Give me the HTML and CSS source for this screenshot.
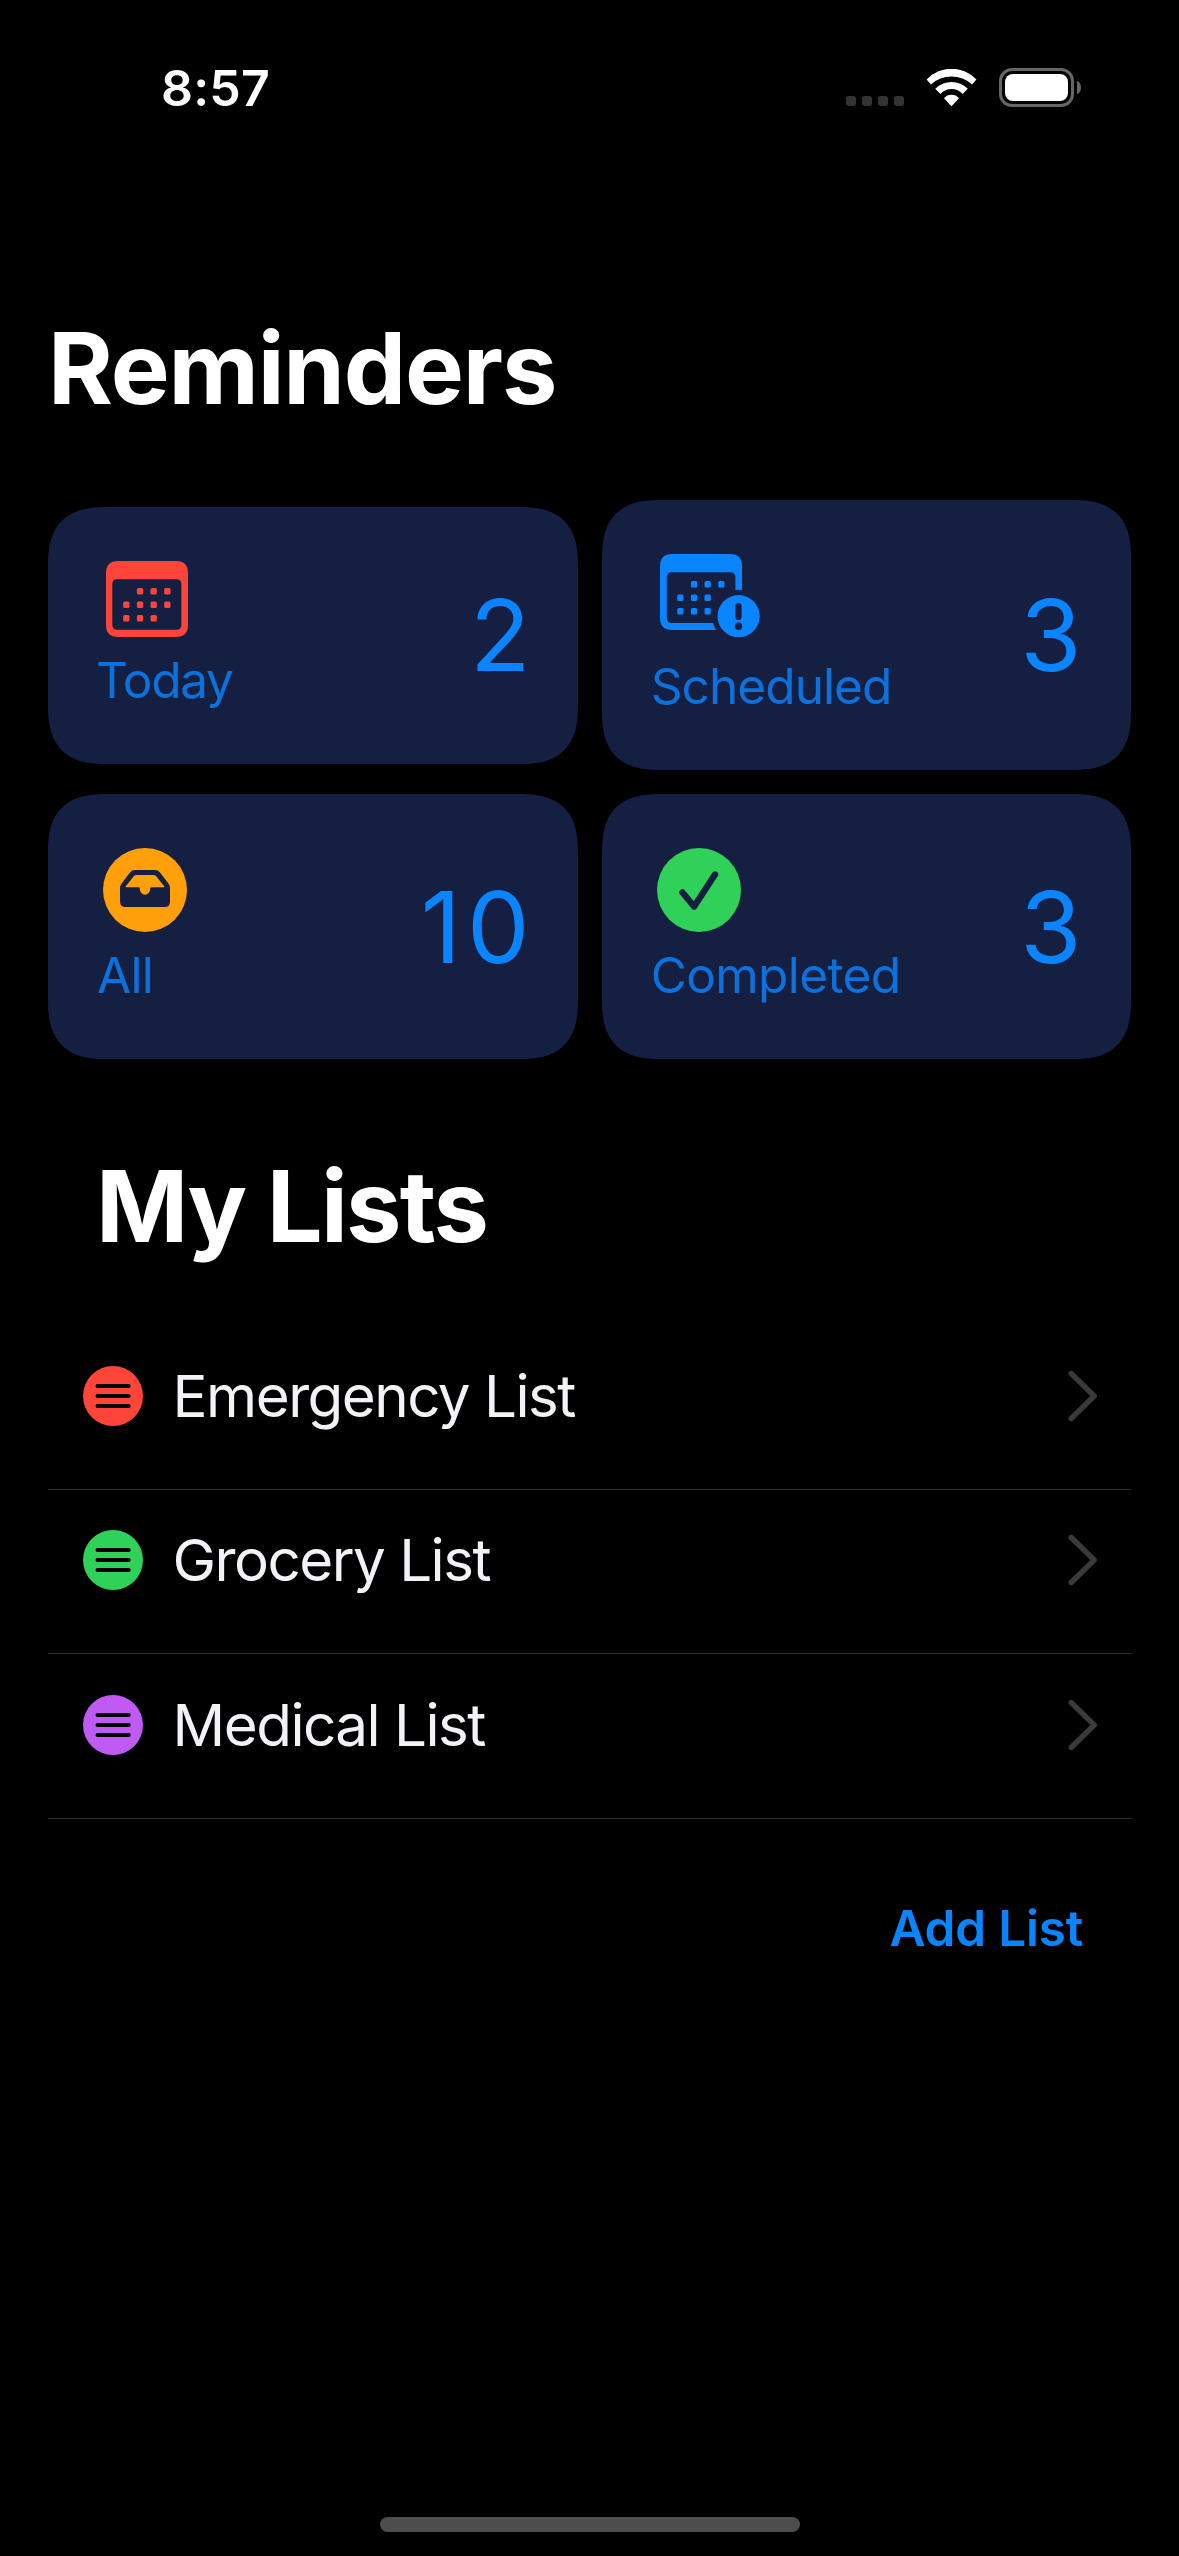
FILE: index.html
```html
<!DOCTYPE html>
<html lang="en">
<head>
<meta charset="utf-8">
<title>Reminders</title>
<link rel="stylesheet" href="styles.css">
</head>
<body>
<header class="status">
  <span class="time">8:57</span>
  <div class="indicators">
    <div class="signal"><i></i><i></i><i></i><i></i></div>
    <svg class="wifi" viewBox="926 69 51 38" width="51" height="38" fill="#fff">
      <path d="M926.6 79.6A34 34 0 0 1 976.4 79.6L972 84.4A30.8 30.8 0 0 0 931 84.4Z"/>
      <path d="M935.2 88.8A22.7 22.7 0 0 1 967.8 88.8L962.5 93.9A15 15 0 0 0 940.5 93.9Z"/>
      <path d="M944 98.2A10 10 0 0 1 959 98.2L951.5 106.2Z"/>
    </svg>
    <div class="battery"><div class="shell"><div class="level"></div></div><div class="nub"></div></div>
  </div>
</header>
<main>
  <h1 class="title">Reminders</h1>
  <section class="cards">
    <article class="card">
      <div class="info">
        <svg class="icon cal" viewBox="106 561 82 76" width="82" height="76" fill="#ff453a">
          <path fill-rule="evenodd" d="M118 561H176Q188 561 188 573V625Q188 637 176 637H118Q106 637 106 625V573Q106 561 118 561ZM117.300 579.300Q112.300 579.300 112.300 584.300V624.700Q112.300 629.700 117.300 629.700H176.400Q181.400 629.700 181.400 624.700V584.300Q181.400 579.300 176.400 579.300Z"/>
          <g>
            <rect x="136.900" y="588" width="6.300" height="6.600" rx="1.500"/><rect x="150.500" y="588" width="6.300" height="6.600" rx="1.500"/><rect x="164.200" y="588" width="6.300" height="6.600" rx="1.500"/>
            <rect x="123.200" y="601.500" width="6.300" height="6.600" rx="1.500"/><rect x="136.900" y="601.500" width="6.300" height="6.600" rx="1.500"/><rect x="150.500" y="601.500" width="6.300" height="6.600" rx="1.500"/><rect x="164.200" y="601.500" width="6.300" height="6.600" rx="1.500"/>
            <rect x="123.200" y="615" width="6.300" height="6.600" rx="1.500"/><rect x="136.900" y="615" width="6.300" height="6.600" rx="1.500"/><rect x="150.500" y="615" width="6.300" height="6.600" rx="1.500"/>
          </g>
        </svg>
        <span class="label today">Today</span>
      </div>
      <span class="count two">2</span>
    </article>
    <article class="card">
      <div class="info">
        <svg class="icon sched" viewBox="660 554 100 84" width="100" height="84" fill="#0a84ff">
          <path fill-rule="evenodd" d="M672 554H730Q742 554 742 566V618Q742 630 730 630H672Q660 630 660 618V566Q660 554 672 554ZM671.800 572.300Q666.800 572.300 666.800 577.300V618Q666.800 623 671.800 623H730.400Q735.400 623 735.400 618V577.300Q735.400 572.300 730.400 572.300Z"/>
          <rect x="690.900" y="581" width="6.300" height="6.600" rx="1.500"/><rect x="704.500" y="581" width="6.300" height="6.600" rx="1.500"/><rect x="718.200" y="581" width="6.300" height="6.600" rx="1.500"/>
          <rect x="677.200" y="594.500" width="6.300" height="6.600" rx="1.500"/><rect x="690.900" y="594.500" width="6.300" height="6.600" rx="1.500"/><rect x="704.500" y="594.500" width="6.300" height="6.600" rx="1.500"/>
          <rect x="677.200" y="608" width="6.300" height="6.600" rx="1.500"/><rect x="690.900" y="608" width="6.300" height="6.600" rx="1.500"/><rect x="704.500" y="608" width="6.300" height="6.600" rx="1.500"/>
          <circle cx="738.600" cy="616.200" r="26.500" fill="#141f42"/>
          <circle cx="738.600" cy="616.200" r="21.100"/>
          <path d="M738.500 606V617" stroke="#141f42" stroke-width="6.200" stroke-linecap="round"/>
          <circle cx="738.500" cy="626.300" r="3.700" fill="#141f42"/>
        </svg>
        <span class="label scheduled">Scheduled</span>
      </div>
      <span class="count three">3</span>
    </article>
    <article class="card">
      <div class="info">
        <svg class="icon disc" viewBox="103 848 84 84" width="84" height="84">
          <circle cx="145" cy="890" r="42" fill="#ff9f0a"/>
          <path fill="#141f42" fill-rule="evenodd" d="M135 870H155Q158 870 159.800 872.300L168.600 883.800Q170 885.800 170 888V901.500Q170 907 164.500 907H125.500Q120 907 120 901.500V888Q120 885.800 121.400 883.800L130.200 872.300Q132 870 135 870ZM136.500 875Q134.800 875 133.800 876.300L125.600 886.500Q125.200 887.300 126 887.300H138.600Q139.800 887.300 139.800 888.600V889.200A5.200 5.500 0 0 0 150.200 889.200V888.600Q150.200 887.300 151.400 887.300H164Q164.800 887.300 164.400 886.500L156.200 876.300Q155.200 875 153.500 875Z"/>
        </svg>
        <span class="label all">All</span>
      </div>
      <span class="count ten">10</span>
    </article>
    <article class="card">
      <div class="info">
        <svg class="icon disc" viewBox="657 848 84 84" width="84" height="84">
          <circle cx="699" cy="890" r="42" fill="#30d158"/>
          <path d="M682.500 892.500L694.100 906.500L715 874.500" fill="none" stroke="#141f42" stroke-width="6.400" stroke-linecap="round" stroke-linejoin="round"/>
        </svg>
        <span class="label completed">Completed</span>
      </div>
      <span class="count three">3</span>
    </article>
  </section>
  <h2 class="subtitle">My Lists</h2>
  <ul class="lists">
    <li class="row">
      <svg class="bullet" viewBox="0 0 60 60" width="60" height="60"><circle cx="30" cy="30" r="30" fill="#ff453a"/><path d="M14.600 20H45.600M14.600 30H45.600M14.600 40H45.600" stroke="#000" stroke-width="4.200" stroke-linecap="round"/></svg>
      <span class="name">Emergency List</span>
      <svg class="chevron" viewBox="0 0 30 52" width="30" height="52"><path d="M3.200 3.500L26.200 26L3.200 48.500" fill="none" stroke="#3a3a3c" stroke-width="5.400" stroke-linecap="round" stroke-linejoin="round"/></svg>
    </li>
    <li class="row">
      <svg class="bullet" viewBox="0 0 60 60" width="60" height="60"><circle cx="30" cy="30" r="30" fill="#30d158"/><path d="M14.600 20H45.600M14.600 30H45.600M14.600 40H45.600" stroke="#000" stroke-width="4.200" stroke-linecap="round"/></svg>
      <span class="name">Grocery List</span>
      <svg class="chevron" viewBox="0 0 30 52" width="30" height="52"><path d="M3.200 3.500L26.200 26L3.200 48.500" fill="none" stroke="#3a3a3c" stroke-width="5.400" stroke-linecap="round" stroke-linejoin="round"/></svg>
    </li>
    <li class="row">
      <svg class="bullet" viewBox="0 0 60 60" width="60" height="60"><circle cx="30" cy="30" r="30" fill="#bf5af2"/><path d="M14.600 20H45.600M14.600 30H45.600M14.600 40H45.600" stroke="#000" stroke-width="4.200" stroke-linecap="round"/></svg>
      <span class="name">Medical List</span>
      <svg class="chevron" viewBox="0 0 30 52" width="30" height="52"><path d="M3.200 3.500L26.200 26L3.200 48.500" fill="none" stroke="#3a3a3c" stroke-width="5.400" stroke-linecap="round" stroke-linejoin="round"/></svg>
    </li>
  </ul>
  <a class="add">Add List</a>
</main>
<div class="home"></div>
</body>
</html>
```
FILE: styles.css
```css
* { box-sizing: border-box; margin: 0; padding: 0; }
body {
  display: flex;
  flex-direction: column;
  width: 1179px;
  height: 2556px;
  overflow: hidden;
  background: #000;
  color: #fff;
  font-family: Inter, "Liberation Sans", sans-serif;
}
.status {
  display: flex;
  justify-content: space-between;
  align-items: center;
  height: 117px;
  padding: 58px 98px 0 161px;
}
.time { font-size: 50px; font-weight: 600; line-height: 60px; letter-spacing: 0.2px; }
.indicators { display: flex; align-items: center; }
.signal { display: flex; gap: 6px; margin: 27px 22px 0 0; }
.signal i { width: 10px; height: 10px; border-radius: 3px; background: #333; }
.wifi { margin-right: 22px; }
.battery { display: flex; align-items: center; gap: 3px; }
.shell { width: 75px; height: 39px; padding: 3px; border: 3px solid #666; border-radius: 13px; }
.level { height: 27px; border-radius: 8px; background: #fff; }
.nub { width: 4px; height: 13px; border-radius: 0 4px 4px 0 / 0 6.5px 6.5px 0; background: #666; }
main { display: flex; flex-direction: column; padding: 191px 48px 0; }
.title, .subtitle { font-size: 99px; font-weight: 700; line-height: 120px; }
.title { letter-spacing: -1.16px; }
.cards {
  display: grid;
  grid-template-columns: 1fr 1fr;
  grid-template-rows: 270px 265px;
  align-items: center;
  gap: 24px;
  margin-top: 72px;
}
.card {
  display: flex;
  justify-content: space-between;
  align-items: center;
  padding: 54px 48px;
  border-radius: 48px;
  background: #141f42;
}
@supports (corner-shape: superellipse(1.4)) {
  .card { border-radius: 60px; corner-shape: superellipse(1.4); }
}
.info { display: flex; flex-direction: column; align-items: flex-start; gap: 13px; }
.icon { display: block; }
.cal { margin-left: 10px; }
.sched { margin: 0 0 5px 10.5px; }
.disc { margin-left: 7px; }
.label { color: #0b72dd; font-size: 49.5px; line-height: 60px; }
.today { letter-spacing: -1.27px; }
.scheduled { margin-left: 1.2px; letter-spacing: -0.9px; }
.all { margin-left: 1px; letter-spacing: -0.75px; }
.completed { margin-left: 1.2px; letter-spacing: -0.6px; }
.count { color: #0a84ff; font-size: 99px; line-height: 120px; }
.two { margin-right: -1px; }
.three { margin-right: 1.7px; }
.ten { margin-right: -6px; letter-spacing: 6px; }
.subtitle { margin: 87px 0 0 48px; letter-spacing: -1.81px; }
.lists { margin-top: 59px; list-style: none; }
.row {
  display: flex;
  align-items: center;
  height: 164.5px;
  padding: 0 33.3px 22px 35px;
  border-bottom: 1px solid #2e2e30;
}
.name { margin-left: 29.6px; color: #f2f2f7; font-size: 58.3px; line-height: 72px; letter-spacing: -1.52px; }
.chevron { margin-left: auto; }
.add {
  align-self: flex-end;
  margin: 79px 48px 0 0;
  color: #0a84ff;
  font-size: 49.5px;
  font-weight: 600;
  line-height: 60px;
  letter-spacing: -0.2px;
}
.home { width: 420px; height: 15px; margin: auto auto 24px; border-radius: 8px; background: #4d4d4d; }
```
